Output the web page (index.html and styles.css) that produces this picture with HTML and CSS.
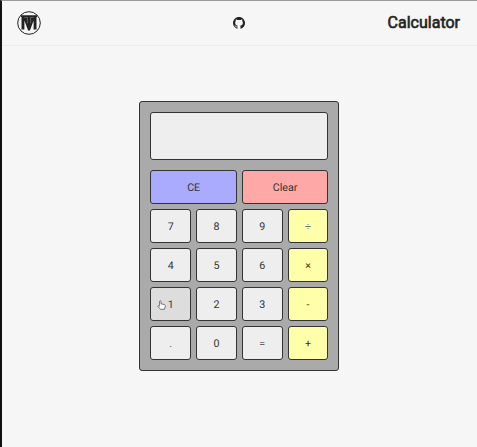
FILE: index.html
```html
<!DOCTYPE html>
<html lang="en">
<head>
<meta charset="utf-8">
<title>Calculator</title>
<link rel="stylesheet" href="styles.css">
</head>
<body>
<header class="header">
  <svg class="logo" viewBox="0 0 24 24" aria-hidden="true">
    <circle cx="12" cy="12" r="11.3" fill="none" stroke="#222"/>
    <path d="M4 4.3H20V6H19.5V18.5H16.6V9.5L12.9 19.5H11.1L7.4 9.5V18.5H4.5V6H4Z" fill="#222"/>
    <path d="M7.4 6.4H10.4V12.4M16.6 6.4H13.6V12.4" fill="none" stroke="#888" stroke-width=".6"/>
  </svg>
  <svg class="github" viewBox="0 0 16 16" aria-hidden="true">
    <path fill="#222" d="M8 0C3.58 0 0 3.58 0 8c0 3.54 2.29 6.53 5.47 7.59.4.07.55-.17.55-.38 0-.19-.01-.82-.01-1.49-2.01.37-2.53-.49-2.69-.94-.09-.23-.48-.94-.82-1.13-.28-.15-.68-.52-.01-.53.63-.01 1.08.58 1.23.82.72 1.21 1.87.87 2.33.66.07-.52.28-.87.51-1.07-1.78-.2-3.64-.89-3.64-3.95 0-.87.31-1.59.82-2.15-.08-.2-.36-1.02.08-2.12 0 0 .67-.21 2.2.82.64-.18 1.32-.27 2-.27s1.36.09 2 .27c1.53-1.04 2.2-.82 2.2-.82.44 1.1.16 1.92.08 2.12.51.56.82 1.27.82 2.15 0 3.07-1.87 3.75-3.65 3.95.29.25.54.73.54 1.48 0 1.07-.01 1.93-.01 2.2 0 .21.15.46.55.38A8.01 8.01 0 0 0 16 8c0-4.42-3.58-8-8-8z"/>
  </svg>
  <h1 class="title">Calculator</h1>
</header>
<main class="main">
  <div class="calculator">
    <div class="display"></div>
    <div class="keys">
      <button class="key wide ce">CE</button>
      <button class="key wide clear">Clear</button>
      <button class="key">7</button>
      <button class="key">8</button>
      <button class="key">9</button>
      <button class="key op soft">÷</button>
      <button class="key">4</button>
      <button class="key">5</button>
      <button class="key">6</button>
      <button class="key op">×</button>
      <button class="key hovered">1<svg class="pointer" viewBox="0 0 9 10" aria-hidden="true"><path d="M2.6 5.8V1.2Q3.3.2 4 1.2V3.8L7.6 4.6Q8.5 5 8.3 6.2L7.4 9.3H3.6L.7 6.2Q.8 5 2.6 6.4" fill="#fff" stroke="#444" stroke-width=".7"/></svg></button>
      <button class="key">2</button>
      <button class="key">3</button>
      <button class="key op">-</button>
      <button class="key soft">.</button>
      <button class="key">0</button>
      <button class="key soft">=</button>
      <button class="key op">+</button>
    </div>
  </div>
</main>
</body>
</html>
```
FILE: styles.css
```css
* {
  box-sizing: border-box;
}

body {
  margin: 0;
  height: 447px;
  display: flex;
  flex-direction: column;
  overflow: hidden;
  border-left: 2px solid #111;
  border-top: 1px solid #999;
  background: #f6f6f6;
  color: #222;
  font-family: Roboto, sans-serif;
}

.header {
  height: 45px;
  flex: none;
  display: grid;
  grid-template-columns: 1fr auto 1fr;
  align-items: center;
  padding: 0 17px 1px 15px;
  border-bottom: 1px solid #ececec;
}

.logo {
  width: 24px;
  height: 24px;
}

.github {
  width: 12px;
  height: 12px;
}

.title {
  margin: 0;
  justify-self: end;
  font-size: 16px;
  line-height: 20px;
  font-weight: 400;
  -webkit-text-stroke: 0.6px #222;
}

.main {
  flex: 1;
  padding-top: 55px;
}

.calculator {
  width: 200px;
  height: 270px;
  margin-left: 137.4px;
  padding: 10px;
  display: flex;
  flex-direction: column;
  gap: 10px;
  border: 1px solid #333;
  border-radius: 3px;
  background: #aaa;
}

.display {
  height: 48px;
  border: 1px solid #333;
  border-radius: 3px;
  background: #eee;
}

.keys {
  display: grid;
  grid-template-columns: repeat(4, 1fr);
  grid-auto-rows: 34px;
  gap: 5px;
}

.key {
  position: relative;
  min-width: 0;
  padding: 0;
  border: 1px solid #333;
  border-radius: 3px;
  background: #eee;
  color: #333;
  font: 10.67px Roboto, sans-serif;
  text-rendering: geometricPrecision;
}

.wide {
  grid-column: span 2;
}

.ce {
  background: #aaf;
}

.clear {
  background: #ffa8a8;
}

.op {
  background: #ffa;
}

.soft {
  color: #666;
}

.hovered {
  background: #ddd;
}

.pointer {
  position: absolute;
  left: 6px;
  top: 12px;
  width: 9px;
  height: 10px;
}
```
